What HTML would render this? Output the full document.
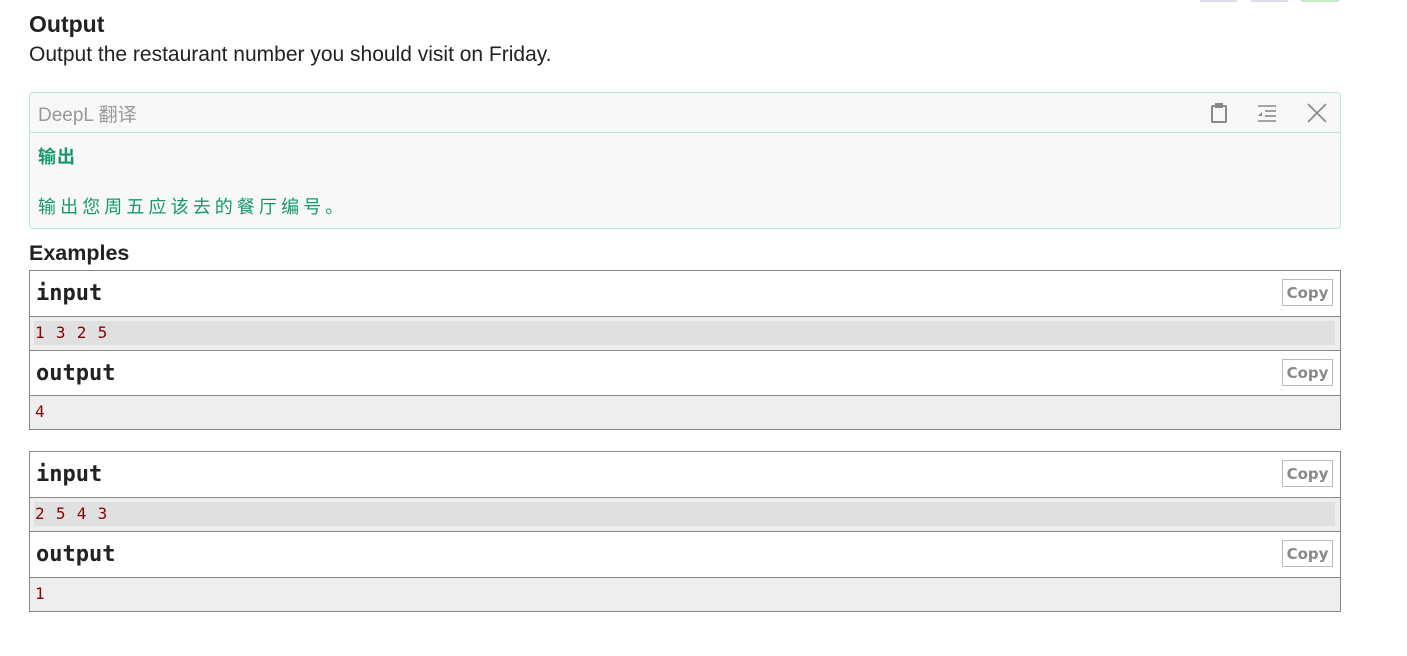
<!DOCTYPE html>
<html><head><meta charset="utf-8"><style>
body{margin:0;width:1407px;height:656px;background:#fff;position:relative;overflow:hidden;font-family:"Liberation Sans",Arial,sans-serif;color:#222}
.a{position:absolute}
h3{position:absolute;margin:0;font-size:23px;font-weight:bold;color:#222}
.desc{left:29px;top:43px;font-size:21px;color:#222}
.dl{left:29px;top:92px;width:1310px;height:135px;border:1px solid #b7ebd9;border-radius:4px;background:#f8f8f8}
.dlh{position:absolute;left:0;top:0;right:0;height:39px;border-bottom:1px solid #b7ebd9}
.dlt{position:absolute;left:8px;top:7px;font-size:19px;color:#999;font-family:"Liberation Sans","Noto Sans CJK SC",sans-serif}
.zh{position:absolute;left:8px;color:#16996a;font-size:18px;letter-spacing:4.1px;font-family:"Liberation Sans","Noto Sans CJK SC",sans-serif}
.ex{position:absolute;left:29px;width:1310px;border:1px solid #888}
.hd{height:45px;position:relative;border-bottom:1px solid #888;background:#fff}
.hd span{position:absolute;left:6px;top:10px;font-family:"DejaVu Sans Mono","Liberation Mono",monospace;font-weight:bold;font-size:22px;color:#222}
.cp{position:absolute;right:7px;top:8px;border:1px solid #bbb;font-family:"DejaVu Sans","Liberation Sans",sans-serif;font-size:15px;font-weight:bold;color:#888;text-align:center;line-height:27px;box-sizing:border-box;width:51px;height:27px}
.dt{height:33px;position:relative;background:#eee;border-bottom:1px solid #888}
.dt.last{border-bottom:none}
.dt .hl{position:absolute;left:4px;right:5px;top:4px;height:24px;background:#e0e0e0}
.dt span{position:absolute;left:5px;top:6px;font-family:"DejaVu Sans Mono","Liberation Mono",monospace;font-size:16px;color:#8b0000;letter-spacing:0.8px}
</style></head><body>
<div class="a" style="left:1200px;top:0;width:37px;height:2px;background:#dde"></div>
<div class="a" style="left:1251px;top:0;width:37px;height:2px;background:#dde"></div>
<div class="a" style="left:1301px;top:0;width:38px;height:2px;background:#c8eec8"></div>
<h3 style="left:29px;top:11px">Output</h3>
<div class="a desc">Output the restaurant number you should visit on Friday.</div>
<div class="a dl">
 <div class="dlh"><div class="dlt">DeepL 翻译</div>
  <svg class="a" style="left:1178px;top:9px" width="22" height="22" viewBox="0 0 22 22" fill="none" stroke="#888" stroke-width="2"><rect x="4" y="4" width="14" height="16" rx="1"/><rect x="8" y="2" width="6" height="3" fill="#888"/></svg>
  <svg class="a" style="left:1226px;top:9px" width="22" height="22" viewBox="0 0 22 22" stroke="#888" stroke-width="1.6"><line x1="2" y1="4" x2="20" y2="4"/><line x1="9" y1="9" x2="20" y2="9"/><line x1="9" y1="14" x2="20" y2="14"/><line x1="2" y1="19" x2="20" y2="19"/><path d="M2 14 L6 10 L6 14Z" fill="#888" stroke="none"/></svg>
  <svg class="a" style="left:1276px;top:9px" width="22" height="22" viewBox="0 0 22 22" stroke="#888" stroke-width="1.6"><line x1="2" y1="2" x2="20" y2="20"/><line x1="20" y1="2" x2="2" y2="20"/></svg>
 </div>
 <div class="zh" style="top:50px;font-weight:bold;letter-spacing:1px">输出</div>
 <div class="zh" style="top:100px">输出您周五应该去的餐厅编号。</div>
</div>
<h3 style="left:29px;top:241px;font-size:21.5px">Examples</h3>
<div class="ex" style="top:270px">
 <div class="hd"><span>input</span><div class="cp">Copy</div></div>
 <div class="dt"><div class="hl"></div><span>1 3 2 5</span></div>
 <div class="hd" style="height:44px"><span>output</span><div class="cp">Copy</div></div>
 <div class="dt last"><span>4</span></div>
</div>
<div class="ex" style="top:451px">
 <div class="hd"><span>input</span><div class="cp">Copy</div></div>
 <div class="dt"><div class="hl"></div><span>2 5 4 3</span></div>
 <div class="hd"><span>output</span><div class="cp">Copy</div></div>
 <div class="dt last"><span>1</span></div>
</div>
</body></html>
